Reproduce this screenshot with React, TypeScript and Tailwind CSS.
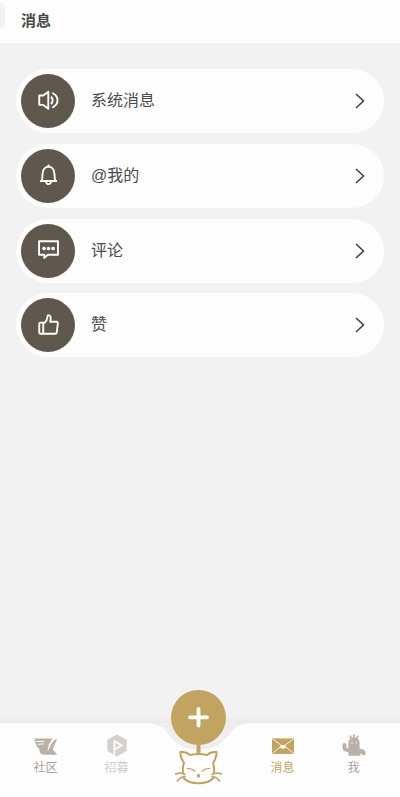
import type { ReactNode } from "react";

type MessageItem = {
  label: string;
  icon: ReactNode;
};

type TabItem = {
  label: string;
  icon: ReactNode;
  color: string;
};

const messages: MessageItem[] = [
  {
    label: "系统消息",
    icon: (
      <>
        <path d="M1.2 5.2H5L9.8 1.6V17.8L5 14.2H1.2Z" />
        <path d="M12.4 6.2Q15.6 9.8 12.4 13.4" />
        <path d="M13.6 2.8Q18.6 5.4 18.6 9.8T13.6 16.8" />
      </>
    ),
  },
  {
    label: "@我的",
    icon: (
      <>
        <path d="M2 16.2H18M3.8 16L4.4 9C4.6 5.2 6.8 2.6 10 2.6S15.4 5.2 15.6 9L16.2 16M10 2.6V.4" />
        <path d="M7.6 17Q8 19.2 10 19.2T12.4 17" />
      </>
    ),
  },
  {
    label: "评论",
    icon: (
      <>
        <path d="M1 2.2H19V15H9.4L6 18V15H1Z" />
        <path d="M5.6 9H5.9M9.9 9H10.2M14.2 9H14.5" strokeWidth={3.2} strokeLinecap="round" />
      </>
    ),
  },
  {
    label: "赞",
    icon: (
      <path d="M5 8.4V18.6M2.2 8.2H6.6C8.6 6.6 8.6 4.6 9.2 1.8C9.6 .8 11.8 1 12 3C12.2 4.6 12 6 11.6 7.4H17.4C18.6 7.4 19 8 18.9 9L17.9 17.2C17.8 18.2 17.2 18.8 16.2 18.8H2.4C1.6 18.8 1.2 18.4 1.2 17.6V9.2C1.2 8.6 1.6 8.2 2.2 8.2Z" />
    ),
  },
];

const leftTabs: TabItem[] = [
  {
    label: "社区",
    color: "text-[#aaa299]",
    icon: (
      <>
        <path
          d="M.4 4.6H18.6L14.6 11L15.6 14.4L20.4 11.2L18.8 15.4L23.2 20.8H10.4C6.6 20.6 5.2 18.2 5.4 15L3.6 13.6L2.2 10.8L.8 7.2Z"
          fill="#b9b1a8"
        />
        <path d="M15.4 15C16 10.6 18.6 6.8 23 4.6C22 9 19.8 13 15.4 15Z" fill="#b9b1a8" />
        <path
          d="M2.4 7.6L10.4 7.2M4 10.4L9.6 9.8M14 16.4C14.8 11.4 16.8 7.4 20 5"
          stroke="#fdfdfd"
          strokeWidth="1"
          fill="none"
        />
      </>
    ),
  },
  {
    label: "招募",
    color: "text-[#d2cdc8]",
    icon: (
      <>
        <path d="M12 .4L21.6 5.8V17L12 22.4L2.4 17V5.8Z" fill="#d5d0cb" />
        <path d="M9.4 20.4V7.2L16.6 11.2L9.6 15.4" stroke="#fdfdfd" strokeWidth="1.8" fill="none" />
      </>
    ),
  },
];

const rightTabs: TabItem[] = [
  {
    label: "消息",
    color: "text-[#c2a461]",
    icon: (
      <>
        <path d="M1 4.4H23V20H1Z" fill="#c2a461" />
        <path d="M1.4 4.8L12 12.6L22.6 4.8M1.4 19.6L9.4 12.6M22.6 19.6L14.6 12.6" stroke="#fdfdfd" strokeWidth=".9" fill="none" />
        <ellipse cx="12" cy="12.8" rx="2.8" ry="1.9" fill="#fdfdfd" />
      </>
    ),
  },
  {
    label: "我",
    color: "text-[#a9a198]",
    icon: (
      <>
        <path
          d="M6.4 21.8V9C6.4 5.6 8.8 3.6 12 3.6S17.6 5.6 17.6 9V15C21 14.4 23.8 16.4 23.6 19.6C23.4 22 20.4 22 20.2 20.2L18.4 19.6V21.8Z"
          fill="#b9b1a8"
        />
        <path d="M2.4 11V13.6Q2.6 16.2 7 16.2" stroke="#b9b1a8" strokeWidth="3.8" strokeLinecap="round" fill="none" />
        <path d="M9.2 5.4L8.4 1.6M12 4.6V.2M14.8 5.4L15.8 1.6" stroke="#b9b1a8" strokeWidth="1.7" fill="none" />
        <path d="M10.1 7.8V10M14.1 7.8V10" stroke="#e9e5e1" strokeWidth="1.2" />
      </>
    ),
  },
];

function MessageRow({ label, icon }: MessageItem) {
  return (
    <button className="flex h-16 w-full items-center rounded-full bg-[#fdfdfd] pr-[19px] pl-[5px] text-left">
      <span className="flex size-[54px] items-center justify-center rounded-full bg-[#60584c]">
        <svg
          viewBox="0 0 20 20"
          className="mb-0.5 size-[21px]"
          fill="none"
          stroke="#fff"
          strokeWidth="1.8"
          strokeLinejoin="round"
        >
          {icon}
        </svg>
      </span>
      <span className="ml-4 flex-1 text-base text-[#4c4c4c]">{label}</span>
      <svg viewBox="0 0 10 16" className="h-4 w-2.5" fill="none" stroke="#444" strokeWidth="1.6">
        <path d="M1 1L8.5 8L1 15" />
      </svg>
    </button>
  );
}

function Tab({ label, icon, color }: TabItem) {
  return (
    <button className={`flex w-[71px] flex-col items-center text-xs ${color}`}>
      <svg viewBox="0 0 24 22" className="h-[22px] w-6 overflow-visible">
        {icon}
      </svg>
      <span className="mt-1 leading-4">{label}</span>
    </button>
  );
}

export default function App() {
  return (
    <div className="flex h-[797px] w-[400px] flex-col overflow-hidden bg-[#f2f2f2] font-['Liberation_Sans','Noto_Sans_CJK_SC',sans-serif]">
      <header className="flex h-[43px] shrink-0 items-start bg-[#fdfdfd]">
        <span className="mt-[3px] h-[25px] w-[5px] rounded-r bg-[#f2f2f2]" />
        <h1 className="mt-2.5 ml-4 text-[15px] leading-[22px] font-bold text-[#4a4a4a]">消息</h1>
      </header>

      <main className="flex flex-1 flex-col gap-[10.8px] px-4 pt-[26px]">
        {messages.map((m) => (
          <MessageRow key={m.label} {...m} />
        ))}
      </main>

      <nav className="relative flex h-[74px] shrink-0 justify-between bg-[#fdfdfd] pt-[11px] pr-[9px] pl-2.5 shadow-[0_-2px_8px_rgba(0,0,0,0.05)]">
        <div className="flex">
          {leftTabs.map((t) => (
            <Tab key={t.label} {...t} />
          ))}
        </div>
        <div className="flex pr-0.5">
          {rightTabs.map((t) => (
            <Tab key={t.label} {...t} />
          ))}
        </div>

        {/* 中间的发布按钮 */}
        <button aria-label="发布" className="absolute -top-[33px] left-[139px]">
          <svg viewBox="0 0 120 108" className="h-[108px] w-[120px]" fill="none">
            <defs>
              <linearGradient id="notch" x1="0" y1="0" x2="0" y2="1">
                <stop offset="0" stopColor="#eeeeee" />
                <stop offset="1" stopColor="#f0f0f0" />
              </linearGradient>
            </defs>
            <path
              d="M10 33C20 33 24 36 29 42C36 52 44 59 60 59S84 52 91 42C96 36 100 33 110 33Z"
              fill="url(#notch)"
            />
            <path
              d="M13 33.4C21 34 25 37.5 29 42.5C36 52 44 59 60 59S84 52 91 42.5C95 37.5 99 34 107 33.4"
              stroke="#e9e9e9"
              strokeWidth="1"
            />
            <path d="M59.5 53V64" stroke="#c2a461" strokeWidth="4" />
            <circle cx="59.5" cy="27.5" r="27.5" fill="#c2a461" />
            <path d="M59.5 19V35.5M51 27.3H68" stroke="#fff" strokeWidth="3.8" strokeLinecap="round" />
            <g stroke="#c2a461" strokeWidth="2" strokeLinecap="round" strokeLinejoin="round">
              <path d="M44.3 83C43.3 79 43.8 76 45 73C42.6 69.5 41.2 65.5 41.5 62C45.5 61.5 48.5 62.5 51 65Q59.5 63 68 65C70.5 62.5 73.5 61.5 77.5 62C77.8 65.5 76.4 69.5 74 73C75.2 76 75.7 79 74.7 83" />
              <path d="M44.6 88Q49 93.2 59.5 93.2T74.4 88" />
              <path
                d="M36.5 84Q41 82 46 84.5M38.5 91Q41 87 46 86.5M82.5 84Q78 82 73 84.5M80.5 91Q78 87 73 86.5"
                strokeWidth="1.6"
              />
              <path d="M48 78.5Q53 78 56 81.5M71 78.5Q66 78 63 81.5" strokeWidth="1.1" />
            </g>
            <ellipse cx="59.5" cy="85.7" rx="1.5" ry="2" fill="#c2a461" />
          </svg>
        </button>
      </nav>
    </div>
  );
}
